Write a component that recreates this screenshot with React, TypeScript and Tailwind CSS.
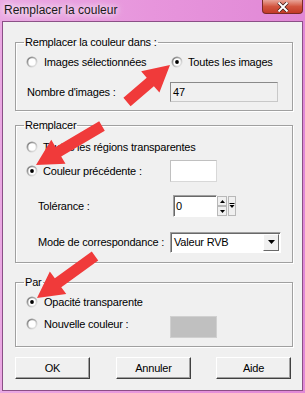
import React from "react";

function Radio({ checked }: { checked?: boolean }) {
  return (
    <svg width="12" height="12" viewBox="0 0 12 12" className="shrink-0">
      <defs>
        <linearGradient id="ro" x1="0" y1="0" x2="1" y2="1">
          <stop offset="0" stopColor="#8c8c8c" />
          <stop offset="0.5" stopColor="#b0b0b0" />
          <stop offset="1" stopColor="#ffffff" />
        </linearGradient>
        <linearGradient id="ri" x1="0" y1="0" x2="1" y2="1">
          <stop offset="0" stopColor="#505050" />
          <stop offset="0.5" stopColor="#c8c8c8" />
          <stop offset="1" stopColor="#e8e8e8" />
        </linearGradient>
      </defs>
      <circle cx="6" cy="6" r="5.5" fill="url(#ro)" />
      <circle cx="6" cy="6" r="4.6" fill="url(#ri)" />
      <circle cx="6" cy="6" r="3.7" fill="#ffffff" />
      {checked && <circle cx="6" cy="6" r="1.9" fill="#000" />}
    </svg>
  );
}

function arrowPoints(tx: number, ty: number, hx: number, hy: number) {
  const dx = hx - tx;
  const dy = hy - ty;
  const len = Math.sqrt(dx * dx + dy * dy);
  const ux = dx / len;
  const uy = dy / len;
  const px = -uy;
  const py = ux;
  const sw = 5.5;
  const hl = 26;
  const hw = 14;
  const bx = hx - ux * hl;
  const by = hy - uy * hl;
  const pts = [
    [tx + px * sw, ty + py * sw],
    [bx + px * sw, by + py * sw],
    [bx + px * hw, by + py * hw],
    [hx, hy],
    [bx - px * hw, by - py * hw],
    [bx - px * sw, by - py * sw],
    [tx - px * sw, ty - py * sw],
  ];
  return pts.map((p) => p.join(",")).join(" ");
}

function Legend({ children }: { children: React.ReactNode }) {
  return <legend className="ml-[8px] px-[1px] leading-[14px]">{children}</legend>;
}

const fieldset =
  "ml-[12px] w-[278px] border border-[#a0a0a0] shadow-[inset_1px_1px_0_#ffffff,1px_1px_0_#ffffff] px-0 flex flex-col";

function Btn({ children }: { children: React.ReactNode }) {
  return (
    <button className="w-[75px] h-[22px] bg-[#f0f0f0] border border-t-[#ffffff] border-l-[#ffffff] border-r-[#404040] border-b-[#404040] shadow-[inset_-1px_-1px_0_#a0a0a0] text-[11px] text-black leading-none">
      {children}
    </button>
  );
}

const sunken =
  "border border-t-[#a0a0a0] border-l-[#a0a0a0] border-r-[#ffffff] border-b-[#ffffff] shadow-[inset_1px_1px_0_#696969]";

export default function App() {
  return (
    <div className="relative w-[305px] h-[393px] overflow-hidden bg-gradient-to-r from-[#eaa8e3] via-[#e795dc] to-[#e188d6] font-['Liberation_Sans',Arial,sans-serif] text-[11px] tracking-[-0.2px] text-black">
      {/* title bar */}
      <div className="h-[21px] flex items-start justify-between pl-[4px] pr-[2px]">
        <div className="pt-[3px] text-[12px] leading-[15px] tracking-normal text-[#1a1a1a] [text-shadow:0_0_6px_#ffffff,0_0_10px_#ffffff]">
          Remplacer la couleur
        </div>
        <div className="w-[41px] h-[14px] rounded-b-[4px] bg-gradient-to-b from-[#e8a398] via-[#d2553f] to-[#c23a27] border border-t-0 border-[#7a2a25] flex items-center justify-center">
          <svg width="12" height="10" viewBox="0 0 12 10">
            <path d="M1.5 0.5 L10.5 9.5 M10.5 0.5 L1.5 9.5" stroke="#3a1a18" strokeWidth="3.4" />
            <path d="M1.5 0.5 L10.5 9.5 M10.5 0.5 L1.5 9.5" stroke="#ffffff" strokeWidth="2" />
          </svg>
        </div>
      </div>

      {/* client */}
      <div className="mx-[2px] h-[370px] w-[301px] bg-[#f0f0f0] border border-[#8b4f86] flex flex-col">
        {/* group 1 */}
        <fieldset className={fieldset + " mt-[13px] h-[76px]"}>
          <Legend>Remplacer la couleur dans :</Legend>
          <div className="mt-[5px] h-[16px] flex items-center pl-[10px]">
            <div className="w-[145px] flex items-center">
              <Radio />
              <span className="ml-[6px]">Images sélectionnées</span>
            </div>
            <div className="flex items-center">
              <Radio checked />
              <span className="ml-[5px]">Toutes les images</span>
            </div>
          </div>
          <div className="mt-[12px] h-[20px] flex items-center pl-[11px]">
            <span className="w-[143px]">Nombre d'images :</span>
            <div className="w-[108px] h-[20px] bg-[#f0f0f0] border border-[#8a8a8a] border-b-[#c8c8c8] border-r-[#c8c8c8] px-[2px] flex items-start pt-[1px]">
              47
            </div>
          </div>
        </fieldset>

        {/* group 2 */}
        <fieldset className={fieldset + " mt-[7px] h-[145px]"}>
          <Legend>Remplacer</Legend>
          <div className="mt-[7px] h-[16px] flex items-center pl-[10px]">
            <Radio />
            <span className="ml-[5px]">Toutes les régions transparentes</span>
          </div>
          <div className="mt-[5px] h-[22px] flex items-center pl-[10px]">
            <div className="w-[144px] flex items-center">
              <Radio checked />
              <span className="ml-[5px]">Couleur précédente :</span>
            </div>
            <div className="w-[47px] h-[22px] bg-white border border-[#d8d8d8] border-t-[#c0c0c0] border-l-[#c0c0c0]" />
          </div>
          <div className="mt-[13px] h-[22px] flex items-center pl-[22px]">
            <span className="w-[135px]">Tolérance :</span>
            <div className={"w-[44px] h-[22px] bg-white px-[2px] flex items-start " + sunken}>
              <span className="pt-[2px]">0</span>
            </div>
            <div className="flex flex-col h-[20px] justify-between ml-[0px] self-center">
              <div className="w-[10px] h-[10px] bg-[#f0f0f0] border border-[#b8b8b8] flex items-center justify-center">
                <svg width="5" height="3" viewBox="0 0 5 3">
                  <path d="M0 3 L2.5 0 L5 3 Z" fill="#000" />
                </svg>
              </div>
              <div className="w-[10px] h-[10px] bg-[#f0f0f0] border border-[#b8b8b8] flex items-center justify-center">
                <svg width="5" height="3" viewBox="0 0 5 3">
                  <path d="M0 0 L2.5 3 L5 0 Z" fill="#000" />
                </svg>
              </div>
            </div>
            <div className="ml-[1px] w-[8px] h-[20px] bg-[#f0f0f0] border border-[#b8b8b8] flex flex-col items-center justify-center">
              <svg width="6" height="6" viewBox="0 0 6 6">
                <path d="M0.5 0.5 H5.5" stroke="#000" strokeWidth="1" />
                <path d="M0.5 2 L3 5 L5.5 2 Z" fill="#000" />
              </svg>
            </div>
          </div>
          <div className="mt-[15px] h-[20px] flex items-center pl-[22px]">
            <span className="w-[132px]">Mode de correspondance :</span>
            <div className={"w-[111px] h-[21px] bg-white flex items-center justify-between " + sunken}>
              <span className="pl-[3px]">Valeur RVB</span>
              <div className="w-[16px] h-[17px] mr-[1px] bg-[#f0f0f0] border border-t-[#ffffff] border-l-[#ffffff] border-r-[#696969] border-b-[#696969] flex items-center justify-center">
                <svg width="7" height="4" viewBox="0 0 7 4">
                  <path d="M0 0 L3.5 4 L7 0 Z" fill="#000" />
                </svg>
              </div>
            </div>
          </div>
        </fieldset>

        {/* group 3 */}
        <fieldset className={fieldset + " mt-[12px] h-[72px]"}>
          <Legend>Par</Legend>
          <div className="mt-[5px] h-[16px] flex items-center pl-[10px]">
            <Radio checked />
            <span className="ml-[6px]">Opacité transparente</span>
          </div>
          <div className="mt-[6px] h-[22px] flex items-start pl-[10px]">
            <div className="w-[144px] h-[14px] mt-[1px] flex items-center">
              <Radio />
              <span className="ml-[6px]">Nouvelle couleur :</span>
            </div>
            <div className="w-[47px] h-[22px] bg-[#c0c0c0] border border-[#d0d0d0]" />
          </div>
        </fieldset>

        {/* buttons */}
        <div className="mt-[10px] flex pl-[12px]">
          <Btn>OK</Btn>
          <div className="ml-[26px]">
            <Btn>Annuler</Btn>
          </div>
          <div className="ml-[25px]">
            <Btn>Aide</Btn>
          </div>
        </div>
      </div>

      {/* red annotation arrows */}
      <svg
        className="absolute inset-0 pointer-events-none"
        width="305"
        height="393"
        viewBox="0 0 305 393"
      >
        <polygon points={arrowPoints(127, 102, 170, 65)} fill="#f03a3a" />
        <polygon points={arrowPoints(102, 126, 36, 165)} fill="#f03a3a" />
        <polygon points={arrowPoints(95, 256, 37, 298)} fill="#f03a3a" />
      </svg>
    </div>
  );
}
